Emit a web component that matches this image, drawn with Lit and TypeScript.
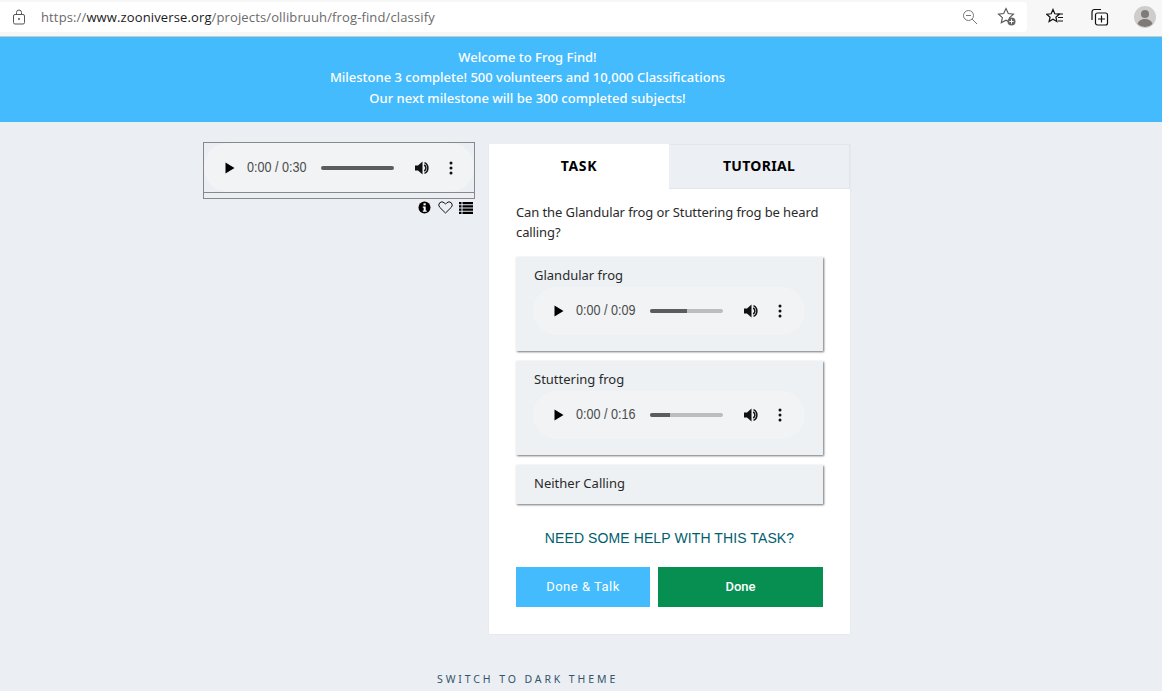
import { LitElement, html, css, svg } from "lit";
import { customElement, property } from "lit/decorators.js";

@customElement("fake-audio")
class FakeAudio extends LitElement {
  @property() time = "0:00 / 0:30";
  @property({ type: Number }) played = 0;
  static styles = css`
    :host { display: block; }
    .pill {
      height: var(--pill-h, 48px); width: 100%; box-sizing: border-box; background: #f1f3f4; border-radius: 24px;
      display: flex; align-items: center; padding-left: 20px; color: #4a4c4e;
      font: 14px/16px "Liberation Sans", Arial, sans-serif;
    }
    .play { width: 12px; height: 14px; flex: none; }
    .time { margin-left: 11px; width: 60px; white-space: nowrap; flex: none; transform: scaleX(0.9); transform-origin: left; margin-top: -2px; }
    .track { margin-left: 14px; width: 73px; height: 4px; border-radius: 2px; background: #bdbdbd; flex: none; position: relative; overflow: hidden; }
    .fill { height: 100%; background: #5c5c5c; }
    .vol { margin-left: 20px; width: 16px; height: 16px; flex: none; }
    .dots { margin-left: 19px; width: 4px; height: 14px; flex: none; }
  `;
  render() {
    return html`<div class="pill">
      <svg class="play" viewBox="0 0 12 14"><path d="M1.500 1.500 10.500 7l-9 5.500z" fill="#000"/></svg>
      <span class="time">${this.time}</span>
      <div class="track"><div class="fill" style="width:${this.played}%"></div></div>
      <svg class="vol" viewBox="0 0 16 16"><path d="M1 5.500h3L8.500 1.500v13L4 10.500H1z" fill="#111"/><path d="M10.200 5a3.500 3.500 0 0 1 0 6" stroke="#111" stroke-width="1.500" fill="none"/><path d="M10.500 2.600a6 6 0 0 1 0 10.800" stroke="#111" stroke-width="1.500" fill="none"/></svg>
      <svg class="dots" viewBox="0 0 4 14"><circle cx="2" cy="2" r="1.500" fill="#111"/><circle cx="2" cy="7" r="1.500" fill="#111"/><circle cx="2" cy="12" r="1.500" fill="#111"/></svg>
    </div>`;
  }
}

@customElement("app-root")
class AppRoot extends LitElement {
  static styles = css`
    :host { display: block; width: 1162px; height: 691px; overflow: hidden; background: #ebeef3; font-family: "Noto Sans", sans-serif; }
    .chrome { background: #f7f7f7; border-bottom: 1px solid #c9c9c9; padding-top: 2px; box-sizing: border-box; height: 37px; display: flex; align-items: flex-start; }
    .addr { width: 1027px; height: 30px; background: #fff; border-radius: 0 4px 4px 0; display: flex; align-items: center; flex: none; }
    .lock { margin-left: 12px; width: 14px; height: 16px; }
    .url { margin-left: 15px; font: 13px "Open Sans", sans-serif; color: #6a6a6a; letter-spacing: 0.13px; white-space: nowrap; }
    .url b { font-weight: 400; color: #1a1a1a; }
    .addr-icons { margin-left: auto; display: flex; align-items: center; gap: 19px; padding-right: 10px; }
    .tools { flex: 1; display: flex; align-items: center; height: 30px; padding-left: 19px; gap: 26px; }
    .avatar { width: 22px; height: 22px; margin-left: -1px; }
    .banner { height: 85px; background: #43bbfd; color: #fff; font-size: 13px; line-height: 20.500px; text-align: center; padding: 9.500px 107px 0 0; box-sizing: border-box; width: 100%; font-weight: 500; }
    .main { display: flex; align-items: flex-start; padding: 20px 0 0 203px; }
    .left { width: 272px; }
    .player { border: 1px solid #888; height: 57px; box-sizing: border-box; --pill-h: 49px; }
    .player .in { border-bottom: 1px solid #888; height: 49px; }
    .meta { display: flex; justify-content: flex-end; align-items: center; gap: 6px; margin-top: 2px; padding-right: 2px; height: 13px; }
    .meta svg:first-child { margin-right: 1px; }
    .card { margin: 2px 0 0 13px; width: 363px; height: 491px; box-sizing: border-box; background: #fff; border: 1px solid #e6e9ee; border-top: none; }
    .tabs { display: flex; height: 45px; }
    .tab { display: flex; align-items: center; justify-content: center; font: 700 14px "Noto Sans", sans-serif; letter-spacing: 0.3px; color: #000; box-sizing: border-box; padding-bottom: 2px; }
    .tab.a { width: 180px; letter-spacing: 0.7px; }
    .tab.b { width: 181px; background: #ecf0f4; border: 1px solid #e2e6eb; border-left: none; }
    .body { padding: 14px 27px 0; }
    .q { font-size: 13px; line-height: 20px; color: #2a2a2a; height: 54px; letter-spacing: -0.1px; margin-top: -1px; padding-bottom: 1px; }
    .ans { background: #eef1f4; box-shadow: 1px 1px 2px rgba(0,0,0,.55); margin-bottom: 10px; padding: 9px 18px 0 18px; box-sizing: border-box; height: 94px; font-size: 13px; line-height: 18px; color: #2a2a2a; width: 307px; }
    .ans.short { height: 39px; }
    .ans fake-audio { margin-top: 3px; margin-left: -1px; }
    .ans.short span { display: block; }
    .help { text-align: center; margin-top: 25px; font: 14px/18px "Liberation Sans", Arial, sans-serif; letter-spacing: 0.1px; color: #00606f; }
    .btns { display: flex; gap: 8px; margin-top: 20px; }
    .btn { height: 40px; display: flex; align-items: center; justify-content: center; color: #fff; font: 500 13px Roboto, sans-serif; padding-bottom: 1px; box-sizing: border-box; }
    .btn.t { width: 134px; background: #43bbfd; letter-spacing: 0.5px; font-weight: 400; }
    .btn.d { width: 165px; background: #078f52; }
    .foot { padding-left: 437px; margin-top: 38px; font: 10.500px/12px "Noto Sans", sans-serif; letter-spacing: 2.900px; color: #33556a; white-space: nowrap; }
  `;
  private star = svg`<path d="M9 1.500l2.300 5 5.200.6-3.900 3.500 1.100 5.200L9 13.200l-4.700 2.600 1.100-5.200-3.900-3.500 5.200-.6z" fill="none" stroke="#555" stroke-width="1.100"/>`;
  render() {
    return html`
      <div class="chrome">
        <div class="addr">
          <svg class="lock" viewBox="0 0 14 16"><rect x="1.500" y="5.500" width="11" height="9.500" rx="1.500" fill="none" stroke="#555" stroke-width="1"/><path d="M4.500 5.500V3.500a2.500 2.500 0 0 1 5 0v2" fill="none" stroke="#555"/><circle cx="7" cy="10" r="1" fill="#555"/></svg>
          <span class="url">https://<b>www.zooniverse.org</b>/projects/ollibruuh/frog-find/classify</span>
          <div class="addr-icons">
            <svg width="16" height="16" viewBox="0 0 16 16"><circle cx="6.500" cy="6.500" r="5" fill="none" stroke="#777"/><path d="M10 10l5 5M4 6.500h5" stroke="#777"/></svg>
            <svg width="20" height="20" viewBox="0 0 20 20">${this.star}<circle cx="14.500" cy="14.500" r="4" fill="#666"/><path d="M14.500 12.300v4.400M12.300 14.500h4.400" stroke="#fff"/></svg>
          </div>
        </div>
        <div class="tools">
          <svg width="18" height="18" viewBox="0 0 18 18"><path d="M7 1.500l1.800 4.300 4.500.4-3.400 3 1 4.400L7 11.300l-3.900 2.300 1-4.400-3.400-3 4.500-.4z" fill="none" stroke="#111" stroke-width="1.200"/><path d="M11.500 6h5.500M12 9.500h5M12 13h5" stroke="#111"/></svg>
          <svg width="19" height="18" viewBox="0 0 19 18"><path d="M2 12V4a2.500 2.500 0 0 1 2.500-2.500H11" fill="none" stroke="#111" stroke-width="1.200"/><rect x="5.500" y="5" width="12" height="12" rx="2" fill="#fff" stroke="#111" stroke-width="1.200"/><path d="M11.500 7.500v7M8 11h7" stroke="#111" stroke-width="1.200"/></svg>
          <svg class="avatar" viewBox="0 0 22 22"><circle cx="11" cy="11" r="11" fill="#cfcdcb"/><circle cx="11" cy="8" r="4" fill="#7d7a78"/><path d="M3.500 18c1-3.500 4-5 7.500-5s6.500 1.500 7.500 5a11 11 0 0 1-15 0z" fill="#7d7a78"/></svg>
        </div>
      </div>
      <div class="banner">
        <div>Welcome to Frog Find!</div>
        <div>Milestone 3 complete! 500 volunteers and 10,000 Classifications</div>
        <div>Our next milestone will be 300 completed subjects!</div>
      </div>
      <div class="main">
        <div class="left">
          <div class="player"><div class="in"><fake-audio time="0:00 / 0:30" played="100"></fake-audio></div></div>
          <div class="meta">
            <svg width="13" height="13" viewBox="0 0 13 13"><circle cx="6.500" cy="6.500" r="6" fill="#000"/><rect x="5.500" y="2.300" width="2.200" height="2" fill="#fff"/><path d="M4.800 5.500h2.900v4h1v1.200H4.800V9.500h.9V6.700h-.9z" fill="#fff"/></svg>
            <svg width="15" height="13" viewBox="0 0 15 13"><path d="M7.500 12 1.700 6.300a3.300 3.300 0 0 1 0-4.500 3.300 3.300 0 0 1 4.500 0l1.300 1.300 1.300-1.300a3.300 3.300 0 0 1 4.500 0 3.300 3.300 0 0 1 0 4.500z" fill="none" stroke="#111"/></svg>
            <svg width="14" height="12" viewBox="0 0 14 12"><path d="M0 0h2.500v2.200H0zM3.500 0H14v2.200H3.500zM0 3.300h2.500v2.200H0zM3.500 3.300H14v2.200H3.500zM0 6.600h2.500v2.200H0zM3.500 6.600H14v2.200H3.500zM0 9.800h2.500V12H0zM3.500 9.800H14V12H3.500z" fill="#000"/></svg>
          </div>
        </div>
        <div class="card">
          <div class="tabs"><div class="tab a">TASK</div><div class="tab b">TUTORIAL</div></div>
          <div class="body">
            <div class="q">Can the Glandular frog or Stuttering frog be heard calling?</div>
            <div class="ans"><span>Glandular frog</span><fake-audio time="0:00 / 0:09" played="50"></fake-audio></div>
            <div class="ans"><span>Stuttering frog</span><fake-audio time="0:00 / 0:16" played="27"></fake-audio></div>
            <div class="ans short"><span>Neither Calling</span></div>
            <div class="help">NEED SOME HELP WITH THIS TASK?</div>
            <div class="btns"><div class="btn t">Done &amp; Talk</div><div class="btn d">Done</div></div>
          </div>
        </div>
      </div>
      <div class="foot">SWITCH TO DARK THEME</div>
    `;
  }
}
